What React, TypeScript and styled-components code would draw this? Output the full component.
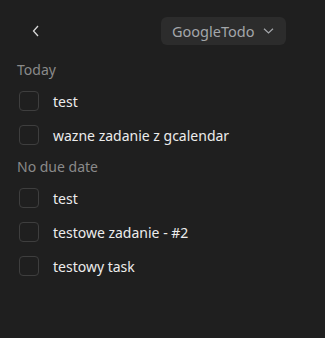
import React from "react";
import styled, { createGlobalStyle } from "styled-components";

const Global = createGlobalStyle`
  html, body { margin: 0; padding: 0; background: #1f1f1f; }
  body { font-family: "Noto Sans", "Open Sans", sans-serif; }
  * { box-sizing: border-box; }
`;

const Page = styled.div`
  width: 325px;
  height: 338px;
  background: #1f1f1f;
  display: flex;
  flex-direction: column;
`;

const TopBar = styled.div`
  height: 55px;
  display: flex;
  align-items: flex-start;
  justify-content: space-between;
  padding: 17px 39px 0 27px;
`;

const BackButton = styled.button`
  width: 18px;
  height: 28px;
  border: none;
  background: transparent;
  padding: 0;
  display: flex;
  align-items: center;
  justify-content: center;
  color: #d8d8d8;
`;

const Dropdown = styled.button`
  width: 125px;
  height: 28px;
  border: none;
  border-radius: 6px;
  background: #2c2c2c;
  display: flex;
  align-items: center;
  padding: 0 0 0 11px;
  gap: 9px;
  font-family: inherit;
  font-size: 14.5px;
  color: #a3a6aa;
`;

const List = styled.div`
  display: flex;
  flex-direction: column;
  padding-left: 17px;
`;

const SectionTitle = styled.div`
  height: 29px;
  line-height: 29px;
  font-size: 14px;
  color: #8a8a8a;
`;

const Row = styled.div`
  height: 34px;
  display: flex;
  align-items: center;
  gap: 14px;
  padding-left: 2px;
`;

const Box = styled.div`
  width: 20px;
  height: 20px;
  border: 1px solid #3e3e3e;
  border-radius: 4px;
  flex: none;
`;

const Label = styled.span`
  font-size: 14px;
  color: #ececec;
`;

const sections = [
  { title: "Today", items: ["test", "wazne zadanie z gcalendar"] },
  { title: "No due date", items: ["test", "testowe zadanie - #2", "testowy task"] },
];

export default function App() {
  return (
    <Page>
      <Global />
      <TopBar>
        <BackButton aria-label="back">
          <svg width="8" height="12" viewBox="0 0 8 12">
            <path d="M6 1 L1.5 6 L6 11" stroke="#d8d8d8" strokeWidth="1.3" fill="none" />
          </svg>
        </BackButton>
        <Dropdown>
          <span>GoogleTodo</span>
          <svg width="11" height="6" viewBox="0 0 11 6">
            <path d="M1 0.8 L5.5 5 L10 0.8" stroke="#a3a6aa" strokeWidth="1.2" fill="none" />
          </svg>
        </Dropdown>
      </TopBar>
      <List>
        {sections.map((s) => (
          <React.Fragment key={s.title}>
            <SectionTitle>{s.title}</SectionTitle>
            {s.items.map((it, i) => (
              <Row key={i}>
                <Box />
                <Label>{it}</Label>
              </Row>
            ))}
          </React.Fragment>
        ))}
      </List>
    </Page>
  );
}
